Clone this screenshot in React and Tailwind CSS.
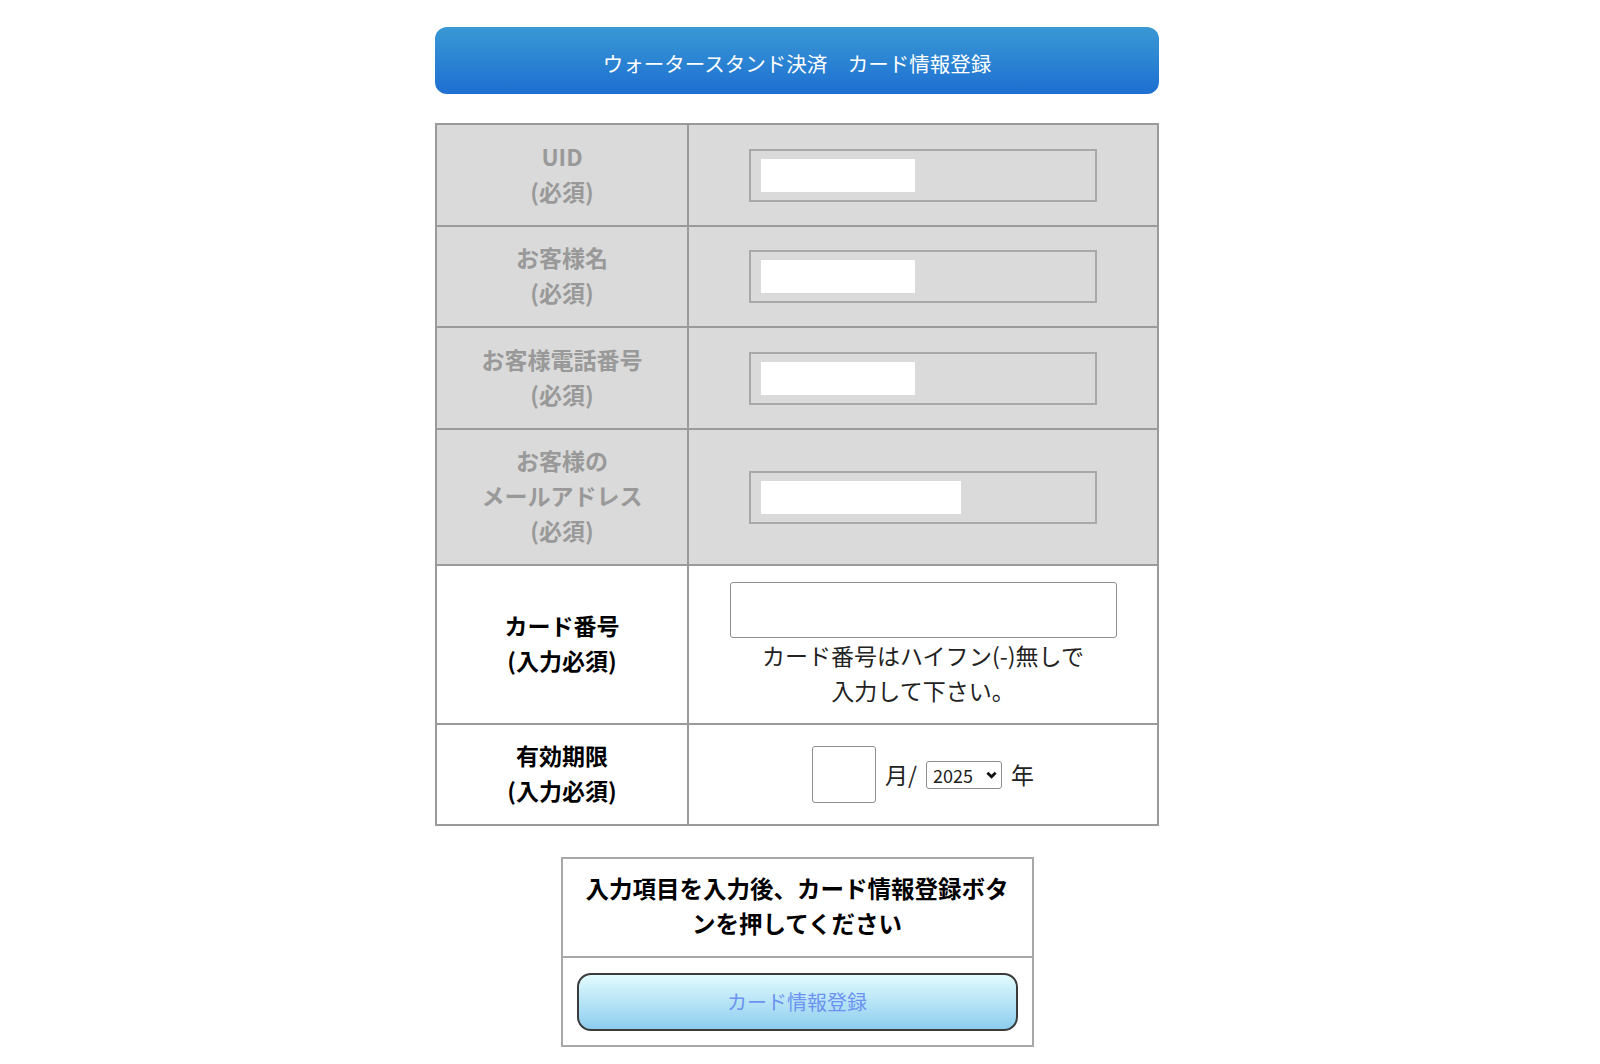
const font = { fontFamily: '"Noto Sans CJK JP", "Noto Sans", sans-serif' };

const grayRows = [
  { label: ['UID', '(必須)'], h: 'h-[102px]', fill: 'w-[154px]' },
  { label: ['お客様名', '(必須)'], h: 'h-[101px]', fill: 'w-[154px]' },
  { label: ['お客様電話番号', '(必須)'], h: 'h-[102px]', fill: 'w-[154px]' },
  { label: ['お客様の', 'メールアドレス', '(必須)'], h: 'h-[136px]', fill: 'w-[200px]' },
];

function Label({ lines, className }) {
  return (
    <div className={className}>
      {lines.map((l) => (
        <div key={l}>{l}</div>
      ))}
    </div>
  );
}

export default function App() {
  return (
    <div
      className="min-h-[1064px] bg-white pt-[27px] text-black"
      style={{ fontFamily: '"Noto Sans CJK JP", "Noto Sans", sans-serif' }}
    >
      <div className="mx-auto w-[724px] -translate-x-[3px]">
        {/* header bar */}
        <div className="flex h-[67px] items-center justify-center rounded-[12px] bg-gradient-to-b from-[#3a98d4] to-[#1f6fd1] pt-[5px] text-[20.5px] text-white">
          ウォータースタンド決済　カード情報登録
        </div>

        {/* form table */}
        <table className="mt-[29px] w-full border-collapse border-2 border-[#9a9a9a]">
          <tbody>
            {grayRows.map((r) => (
              <tr key={r.label[0]} className="bg-[#dadada]">
                <td className={`${r.h} w-[252px] border-2 border-[#9a9a9a] pb-[3px] text-center`}>
                  <Label
                    lines={r.label}
                    className="text-[23px] font-bold leading-[35px] text-[#999999]"
                  />
                </td>
                <td className="border-2 border-[#9a9a9a]">
                  <div className="ml-[60px] flex h-[53px] w-[348px] items-center border-2 border-[#a8a8a8] bg-[#dadada] pl-[10px]">
                    <div className={`h-[33px] ${r.fill} bg-white`} />
                  </div>
                </td>
              </tr>
            ))}

            <tr className="bg-white">
              <td className="h-[159px] border-2 border-[#9a9a9a] pb-[3px] text-center">
                <Label
                  lines={['カード番号', '(入力必須)']}
                  className="text-[23px] font-bold leading-[35px]"
                />
              </td>
              <td className="border-2 border-[#9a9a9a] text-center">
                <div className="mx-auto mt-[1px] h-[56px] w-[387px] rounded-[3px] border border-[#8d8d8d] bg-white" />
                <div className="mt-[0px] text-[23px] leading-[35px] text-[#222]">
                  カード番号はハイフン(-)無しで
                  <br />
                  入力して下さい。
                </div>
              </td>
            </tr>

            <tr className="bg-white">
              <td className="h-[101px] border-2 border-[#9a9a9a] pb-[3px] text-center">
                <Label
                  lines={['有効期限', '(入力必須)']}
                  className="text-[23px] font-bold leading-[35px]"
                />
              </td>
              <td className="border-2 border-[#9a9a9a]">
                <div className="flex items-center justify-center gap-[9px] text-[23px] text-[#222]">
                  <div className="h-[57px] w-[64px] rounded-[3px] border border-[#8d8d8d] bg-white" />
                  <span>月/</span>
                  <div className="flex h-[28px] w-[76px] items-center justify-between rounded-[3px] border border-[#8d8d8d] bg-white pl-[6px] pr-[4px] text-[18px] leading-none">
                    <span>2025</span>
                    <svg viewBox="0 0 12 8" className="h-[8px] w-[11px]">
                      <path d="M1.5 1.5 6 6l4.5-4.5" fill="none" stroke="#111" strokeWidth="3" />
                    </svg>
                  </div>
                  <span>年</span>
                </div>
              </td>
            </tr>
          </tbody>
        </table>

        {/* submit box */}
        <div className="mx-auto mt-[31px] w-[473px] border-2 border-[#a8a8a8]">
          <div className="flex h-[99px] flex-col items-center justify-center border-b-2 border-[#a8a8a8] pb-[3px] text-center text-[23.5px] font-bold leading-[35px]">
            <div>入力項目を入力後、カード情報登録ボタ</div>
            <div>ンを押してください</div>
          </div>
          <div className="px-[14px] pb-[14px] pt-[15px]">
            <div
              className="flex h-[58px] items-center justify-center rounded-[14px] border-[2.5px] border-[#3b3b3b] bg-gradient-to-b from-[#e2fbfe] to-[#8ccdee] text-[20px] text-[#6b93ef]"
              style={font}
            >
              カード情報登録
            </div>
          </div>
        </div>
      </div>
    </div>
  );
}
